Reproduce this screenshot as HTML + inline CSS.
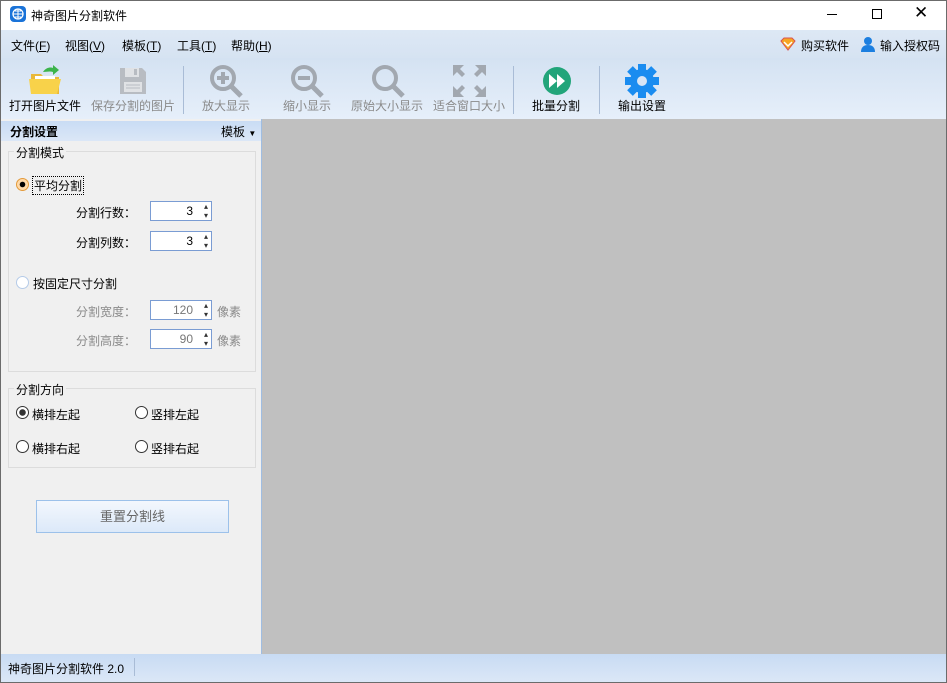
<!DOCTYPE html>
<html><head><meta charset="utf-8"><style>
*{margin:0;padding:0;box-sizing:border-box}
body{width:947px;height:683px;overflow:hidden;font-family:"Liberation Sans","Noto Sans CJK SC",sans-serif;font-size:12px;color:#000;background:#fff;position:relative}
.abs{position:absolute}
#frame{position:absolute;left:0;top:0;width:947px;height:683px;border:1px solid #6b6b6b;pointer-events:none}
.title{left:0;top:0;width:947px;height:30px;background:#fff}
.menu{left:1px;top:30px;width:945px;height:28px;background:linear-gradient(#dde8f5,#d6e3f2)}
.tb{left:1px;top:58px;width:945px;height:61px;background:linear-gradient(#d4e2f2,#e6effa)}
.tbl{position:absolute;top:97px;font-size:12px;color:#000;white-space:nowrap}
.dis{color:#8a8a8a}
.sep{position:absolute;top:66px;width:1px;height:48px;background:#a9bcd6}
.left{left:1px;top:119px;width:261px;height:535px;background:#f0f0f0;border-right:1px solid #9fbde2}
.hdr{left:1px;top:121px;width:260px;height:20px;background:linear-gradient(#c9dcf4,#dbe7f7)}
.gray{left:262px;top:119px;width:684px;height:535px;background:#c0c0c0}
.grp{position:absolute;border:1px solid #dcdcdc}
.gt{position:absolute;background:#f0f0f0;padding:0 2px;font-size:12px}
.radio{position:absolute;width:13px;height:13px;border-radius:50%;border:1px solid #333;background:#fff}
.spin{position:absolute;width:62px;height:20px;border:1px solid #7a9cd3;background:#fff;text-align:right;padding-right:18px;line-height:18px;font-size:12px}
.spin:after{content:"▴\A▾";white-space:pre;position:absolute;right:3px;top:0;font-size:8px;line-height:9px;color:#333}
.status{left:1px;top:654px;width:945px;height:28px;background:linear-gradient(#c8dbf3,#dbe7f7)}
.mi{position:absolute;top:7px}
</style></head><body>
<div class="abs title">
 <div class="abs" style="left:10px;top:6px;width:16px;height:16px;border-radius:4px;background:#1a73d8"></div>
 <svg class="abs" style="left:12px;top:8px" width="12" height="12" viewBox="0 0 12 12"><circle cx="6" cy="6" r="5" fill="none" stroke="#fff" stroke-width="1.3"/><path d="M1 6h10M6 1v10M3 3h6M3 9h6" stroke="#fff" stroke-width="1"/></svg>
 <div class="abs" style="left:31px;top:7px;font-size:12px">神奇图片分割软件</div>
 <div class="abs" style="left:827px;top:14px;width:10px;height:1px;background:#000"></div>
 <div class="abs" style="left:872px;top:9px;width:10px;height:10px;border:1px solid #000"></div>
 <div class="abs" style="left:914px;top:3px;font-size:17px">✕</div>
</div>
<div class="abs menu">
 <div class="mi" style="left:10px">文件(<u>F</u>)</div>
 <div class="mi" style="left:64px">视图(<u>V</u>)</div>
 <div class="mi" style="left:121px">模板(<u>T</u>)</div>
 <div class="mi" style="left:176px">工具(<u>T</u>)</div>
 <div class="mi" style="left:230px">帮助(<u>H</u>)</div>
 <svg class="abs" style="left:779px;top:7px" width="16" height="14" viewBox="0 0 16 14"><path d="M1 4L4 1h8l3 3-7 9z" fill="#f6a623" stroke="#d9534f"/><path d="M4 5l4 4 4-4" stroke="#fff" fill="none" stroke-width="1.5"/></svg>
 <div class="abs" style="left:800px;top:7px">购买软件</div>
 <svg class="abs" style="left:859px;top:6px" width="16" height="16" viewBox="0 0 16 16"><circle cx="8" cy="5" r="4" fill="#1c7fe0"/><path d="M1 16c0-5 3-7 7-7s7 2 7 7z" fill="#1c7fe0"/></svg>
 <div class="abs" style="left:879px;top:7px">输入授权码</div>
</div>
<div class="abs tb">
 <svg class="abs" style="left:28px;top:6px" width="34" height="32" viewBox="0 0 34 32"><path d="M2 10h10l3 3h15v17H2z" fill="#e9b93a"/><rect x="6" y="12" width="20" height="12" fill="#fff"/><path d="M0 15h32l-4 15H2z" fill="#f8d24a"/><path d="M14 8c3-5 8-5 10-4V1l6 5-6 5V8c-3-1-7 0-10 0z" fill="#3cb44b"/></svg>
 <svg class="abs" style="left:117px;top:8px" width="30" height="30" viewBox="0 0 30 30"><path d="M2 2h22l4 4v22H2z" fill="#b8bcc2"/><rect x="7" y="2" width="14" height="9" fill="#e0e2e5"/><rect x="16" y="3" width="3" height="6" fill="#b8bcc2"/><rect x="6" y="16" width="18" height="10" fill="#e0e2e5"/><path d="M8 19h14M8 22h14" stroke="#b8bcc2"/></svg>
 <svg class="abs" style="left:208px;top:6px" width="36" height="34" viewBox="0 0 36 34"><circle cx="14" cy="14" r="11" fill="none" stroke="#a2a8b0" stroke-width="4"/><path d="M22 22l10 10" stroke="#a2a8b0" stroke-width="5"/><path d="M8 14h12M14 8v12" stroke="#a2a8b0" stroke-width="4"/></svg>
 <svg class="abs" style="left:289px;top:6px" width="36" height="34" viewBox="0 0 36 34"><circle cx="14" cy="14" r="11" fill="none" stroke="#a2a8b0" stroke-width="4"/><path d="M22 22l10 10" stroke="#a2a8b0" stroke-width="5"/><path d="M8 14h12" stroke="#a2a8b0" stroke-width="4"/></svg>
 <svg class="abs" style="left:370px;top:6px" width="36" height="34" viewBox="0 0 36 34"><circle cx="14" cy="14" r="11" fill="none" stroke="#a2a8b0" stroke-width="4"/><path d="M22 22l10 10" stroke="#a2a8b0" stroke-width="5"/></svg>
 <svg class="abs" style="left:452px;top:7px" width="33" height="32" viewBox="0 0 33 32"><g fill="#a2a8b0"><path d="M0 0h11l-4 4 5 5-3 3-5-5-4 4z"/><path d="M33 0H22l4 4-5 5 3 3 5-5 4 4z"/><path d="M0 32h11l-4-4 5-5-3-3-5 5-4-4z"/><path d="M33 32H22l4-4-5-5 3-3 5 5 4-4z"/></g></svg>
 <svg class="abs" style="left:541px;top:8px" width="30" height="30" viewBox="0 0 30 30"><circle cx="15" cy="15" r="14" fill="#22a57a"/><path d="M7 8l8 7-8 7zM15 8l8 7-8 7z" fill="#fff"/></svg>
 <svg class="abs" style="left:624px;top:6px" width="34" height="34" viewBox="0 0 34 34"><g fill="#1a8cf0" transform="translate(17 17)"><circle r="12"/><g id="t"><rect x="-4" y="-17" width="8" height="8"/></g><use href="#t" transform="rotate(45)"/><use href="#t" transform="rotate(90)"/><use href="#t" transform="rotate(135)"/><use href="#t" transform="rotate(180)"/><use href="#t" transform="rotate(225)"/><use href="#t" transform="rotate(270)"/><use href="#t" transform="rotate(315)"/></g><circle cx="17" cy="17" r="5" fill="#d8e5f5"/></svg>
 <div class="tbl" style="left:8px;top:39px">打开图片文件</div>
 <div class="tbl dis" style="left:90px;top:39px">保存分割的图片</div>
 <div class="sep" style="left:182px;top:8px"></div>
 <div class="tbl dis" style="left:201px;top:39px">放大显示</div>
 <div class="tbl dis" style="left:282px;top:39px">缩小显示</div>
 <div class="tbl dis" style="left:350px;top:39px">原始大小显示</div>
 <div class="tbl dis" style="left:432px;top:39px">适合窗口大小</div>
 <div class="sep" style="left:512px;top:8px"></div>
 <div class="tbl" style="left:531px;top:39px">批量分割</div>
 <div class="sep" style="left:598px;top:8px"></div>
 <div class="tbl" style="left:617px;top:39px">输出设置</div>
</div>
<div class="abs gray"></div>
<div class="abs left"></div>
<div class="abs hdr"><div class="abs" style="left:9px;top:2px;font-weight:bold">分割设置</div><div class="abs" style="left:220px;top:2px">模板 <span style="font-size:8px">▼</span></div></div>
<div class="grp" style="left:8px;top:151px;width:248px;height:221px"></div>
<div class="gt" style="left:14px;top:144px">分割模式</div>
<div class="radio" style="left:16px;top:178px;border-color:#e39a3a;background:radial-gradient(#000 0 2.5px,#ffd9a8 3px)"></div>
<div class="abs" style="left:32px;top:176px;border:1px dotted #000;padding:0 1px">平均分割</div>
<div class="abs" style="left:76px;top:204px">分割行数：</div>
<div class="spin" style="left:150px;top:201px">3</div>
<div class="abs" style="left:76px;top:234px">分割列数：</div>
<div class="spin" style="left:150px;top:231px">3</div>
<div class="radio" style="left:16px;top:276px;border-color:#b5cbe8"></div>
<div class="abs" style="left:33px;top:275px">按固定尺寸分割</div>
<div class="abs dis" style="left:76px;top:303px">分割宽度：</div>
<div class="spin dis" style="left:150px;top:300px;color:#777">120</div>
<div class="abs dis" style="left:217px;top:303px">像素</div>
<div class="abs dis" style="left:76px;top:332px">分割高度：</div>
<div class="spin dis" style="left:150px;top:329px;color:#777">90</div>
<div class="abs dis" style="left:217px;top:332px">像素</div>
<div class="grp" style="left:8px;top:388px;width:248px;height:80px"></div>
<div class="gt" style="left:14px;top:381px">分割方向</div>
<div class="radio" style="left:16px;top:406px;background:radial-gradient(#333 0 3px,#fff 3.5px)"></div><div class="abs" style="left:32px;top:406px">横排左起</div>
<div class="radio" style="left:135px;top:406px"></div><div class="abs" style="left:151px;top:406px">竖排左起</div>
<div class="radio" style="left:16px;top:440px"></div><div class="abs" style="left:32px;top:440px">横排右起</div>
<div class="radio" style="left:135px;top:440px"></div><div class="abs" style="left:151px;top:440px">竖排右起</div>
<div class="abs" style="left:36px;top:500px;width:193px;height:33px;border:1px solid #9cc1ea;background:linear-gradient(#f3f7fd,#dce9f9);text-align:center;line-height:31px;font-size:13px;color:#666">重置分割线</div>
<div class="abs status"><div class="abs" style="left:7px;top:6px">神奇图片分割软件 2.0</div><div class="abs" style="left:133px;top:4px;width:1px;height:18px;background:#a9bcd6"></div></div>
<div id="frame"></div>
</body></html>
